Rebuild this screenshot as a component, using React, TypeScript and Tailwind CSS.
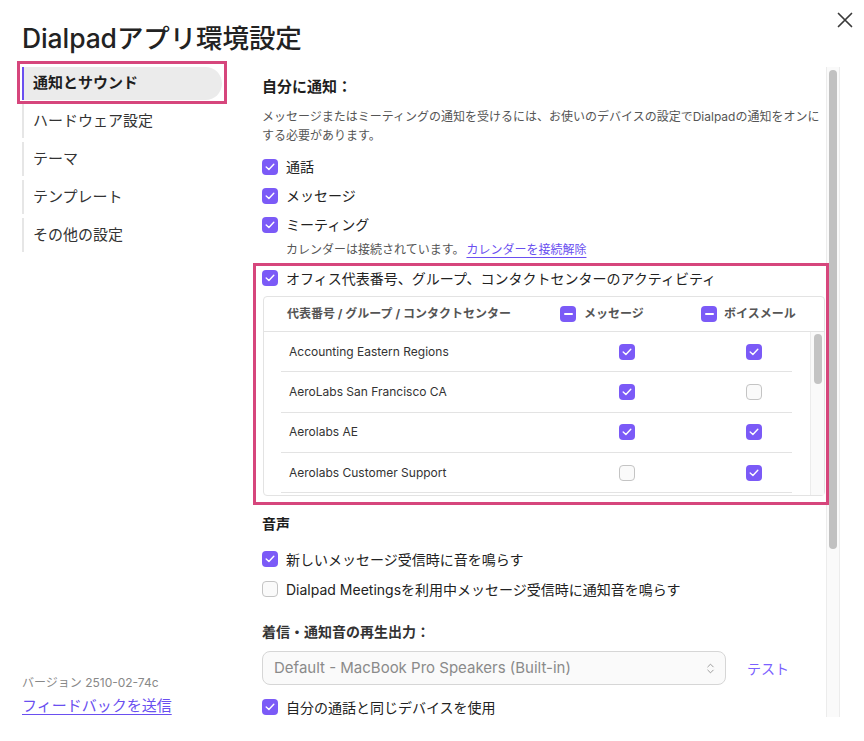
import React from "react";
import { ChevronsUpDown } from "lucide-react";

const FONT = { fontFamily: "Inter, 'Noto Sans CJK JP', 'Noto Sans', sans-serif" };

function Box({ checked = true }: { checked?: boolean }) {
  if (!checked)
    return <span className="block w-4 h-4 shrink-0 rounded-[4px] border border-[#c4c4c4] bg-[#fafafa]" />;
  return (
    <span className="flex w-4 h-4 shrink-0 items-center justify-center rounded-[4px] bg-[#7b5af7]">
      <svg width="10" height="8" viewBox="0 0 10 8">
        <path d="M1.2 4.1 L3.9 6.6 L8.8 1.3" stroke="white" strokeWidth="1.4" fill="none" strokeLinecap="round" strokeLinejoin="round" />
      </svg>
    </span>
  );
}

function Minus() {
  return (
    <span className="flex w-4 h-4 shrink-0 items-center justify-center rounded-[4px] bg-[#7b5af7]">
      <span className="block w-[9px] h-[2px] rounded bg-white" />
    </span>
  );
}

function CheckRow({ label, checked = true, h = "h-[29px]" }: { label: string; checked?: boolean; h?: string }) {
  return (
    <div className={`flex items-center gap-2 ${h}`}>
      <Box checked={checked} />
      <span className="text-[14px] text-[#222]">{label}</span>
    </div>
  );
}

const rows: [string, boolean, boolean][] = [
  ["Accounting Eastern Regions", true, true],
  ["AeroLabs San Francisco CA", true, false],
  ["Aerolabs AE", true, true],
  ["Aerolabs Customer Support", false, true],
  ["", true, true],
];

export default function App() {
  return (
    <div className="relative w-[864px] h-[741px] overflow-hidden bg-white text-[#222]" style={FONT}>
      {/* close */}
      <button className="absolute left-[836px] top-[11px] w-[18px] h-[18px] flex items-center justify-center">
        <svg width="16" height="16" viewBox="0 0 16 16">
          <path d="M1.5 1.5 L14.5 14.5 M14.5 1.5 L1.5 14.5" stroke="#3a3a3a" strokeWidth="1.7" strokeLinecap="round" />
        </svg>
      </button>

      <div className="pl-[22px] pt-[22px] h-[54px] text-[26.5px] leading-[32px] font-medium tracking-[-0.1px] text-[#222]">
        Dialpadアプリ環境設定
      </div>

      <div className="flex mt-[7px]">
        {/* sidebar */}
        <div className="w-[262px] h-[656px] flex flex-col justify-between">
          <div className="flex flex-col">
            <div className="ml-[17px] w-[210px] h-[43px] border-[3px] border-[#d6467c] pl-[2px] pr-[2px] pt-[3px] pb-[1px]">
              <div className="h-full flex items-center rounded-r-full bg-[#ebebeb] border-l-2 border-[#6a4ff0] pl-[9px] text-[15px] font-bold text-[#1e1e1e]">
                通知とサウンド
              </div>
            </div>
            {["ハードウェア設定", "テーマ", "テンプレート", "その他の設定"].map((t) => (
              <div key={t} className="ml-[22px] mb-[4px] h-[34px] flex items-center border-l-2 border-[#e6e6e6] pl-[9px] text-[15px] text-[#333]">
                {t}
              </div>
            ))}
          </div>
          <div className="pl-[22px] flex flex-col gap-[4px]">
            <div className="text-[12px] leading-[16px] text-[#888]">バージョン 2510-02-74c</div>
            <a className="text-[15px] leading-[22px] text-[#6a4ff0] underline underline-offset-[3px] decoration-1">フィードバックを送信</a>
          </div>
        </div>

        {/* main content */}
        <div className="w-[564px] h-[650px] mt-[6px] overflow-hidden">
          <div className="mt-[9px] text-[15px] leading-[22px] font-bold text-[#1e1e1e]">自分に通知：</div>
          <p className="mt-[9px] text-[12px] leading-[19px] text-[#555]">
            メッセージまたはミーティングの通知を受けるには、お使いのデバイスの設定でDialpadの通知をオンに
            <br />
            する必要があります。
          </p>
          <div className="mt-[7px] flex flex-col">
            <CheckRow label="通話" />
            <CheckRow label="メッセージ" />
            <CheckRow label="ミーティング" />
          </div>
          <div className="mt-[2px] pl-[24px] text-[12px] leading-[18px] text-[#555]">
            カレンダーは接続されています。
            <a className="ml-[2px] text-[#6a4ff0] underline underline-offset-[3px] decoration-1">カレンダーを接続解除</a>
          </div>
          <div className="mt-[5px]">
            <CheckRow label="オフィス代表番号、グループ、コンタクトセンターのアクティビティ" h="h-[28px]" />
          </div>

          {/* table */}
          <div className="mt-[4px] ml-[1px] w-[562px] rounded-[4px] border border-[#e3e3e3]">
            <div className="h-[35px] flex items-center border-b border-[#e3e3e3] pl-[23px] text-[12px] font-bold text-[#555]">
              <div className="w-[273px]">代表番号 / グループ / コンタクトセンター</div>
              <div className="w-[141px] flex items-center gap-2">
                <Minus />
                <span>メッセージ</span>
              </div>
              <div className="flex items-center gap-[7px]">
                <Minus />
                <span>ボイスメール</span>
              </div>
            </div>
            <div className="h-[163px] flex overflow-hidden">
              <div className="ml-[17px] w-[511px] flex flex-col">
                {rows.map(([name, m, v], i) => (
                  <div key={i} className="h-[40.3px] shrink-0 flex items-center border-b border-[#e3e3e3] text-[12px] text-[#333]">
                    <div className="w-[296px] pl-[8px]">{name}</div>
                    <div className="w-[100px] flex justify-center">
                      <Box checked={m} />
                    </div>
                    <div className="w-[39px]" />
                    <div className="w-[76px] flex justify-center">
                      <Box checked={v} />
                    </div>
                  </div>
                ))}
              </div>
              <div className="ml-auto w-[14px] border-l border-[#ececec] bg-[#fafafa] pt-[2px] flex justify-center">
                <div className="w-[8px] h-[50px] rounded-full bg-[#c4c4c4]" />
              </div>
            </div>
          </div>

          <div className="mt-[17px] text-[14px] leading-[22px] font-bold text-[#1e1e1e]">音声</div>
          <div className="mt-[9px] flex flex-col">
            <CheckRow label="新しいメッセージ受信時に音を鳴らす" h="h-[30px]" />
            <CheckRow label="Dialpad Meetingsを利用中メッセージ受信時に通知音を鳴らす" checked={false} h="h-[30px]" />
          </div>
          <div className="mt-[17px] text-[14px] leading-[22px] font-bold text-[#333]">着信・通知音の再生出力：</div>
          <div className="mt-[8px] flex items-center">
            <div className="w-[464px] h-[34px] rounded-[8px] border border-[#d6d6d6] bg-[#fafafa] flex items-center justify-between pl-[11px] pr-[8px] text-[15px] text-[#8a8a8a]">
              <span>Default - MacBook Pro Speakers (Built-in)</span>
              <ChevronsUpDown size={13} strokeWidth={1.5} color="#888" />
            </div>
            <a className="ml-[21px] text-[14px] text-[#7b61ff]">テスト</a>
          </div>
          <div className="mt-[8px]">
            <CheckRow label="自分の通話と同じデバイスを使用" h="h-[28px]" />
          </div>
        </div>

        {/* main scrollbar */}
        <div className="w-[14px] h-[650px] mt-[6px] border-x border-[#ececec] bg-[#fafafa] pt-[3px] flex justify-center">
          <div className="w-[8px] h-[479px] rounded-full bg-[#c1c1c1]" />
        </div>
      </div>

      {/* annotation outline */}
      <div className="absolute left-[253px] top-[263px] w-[576px] h-[242px] border-[3px] border-[#d6467c] pointer-events-none" />
    </div>
  );
}
